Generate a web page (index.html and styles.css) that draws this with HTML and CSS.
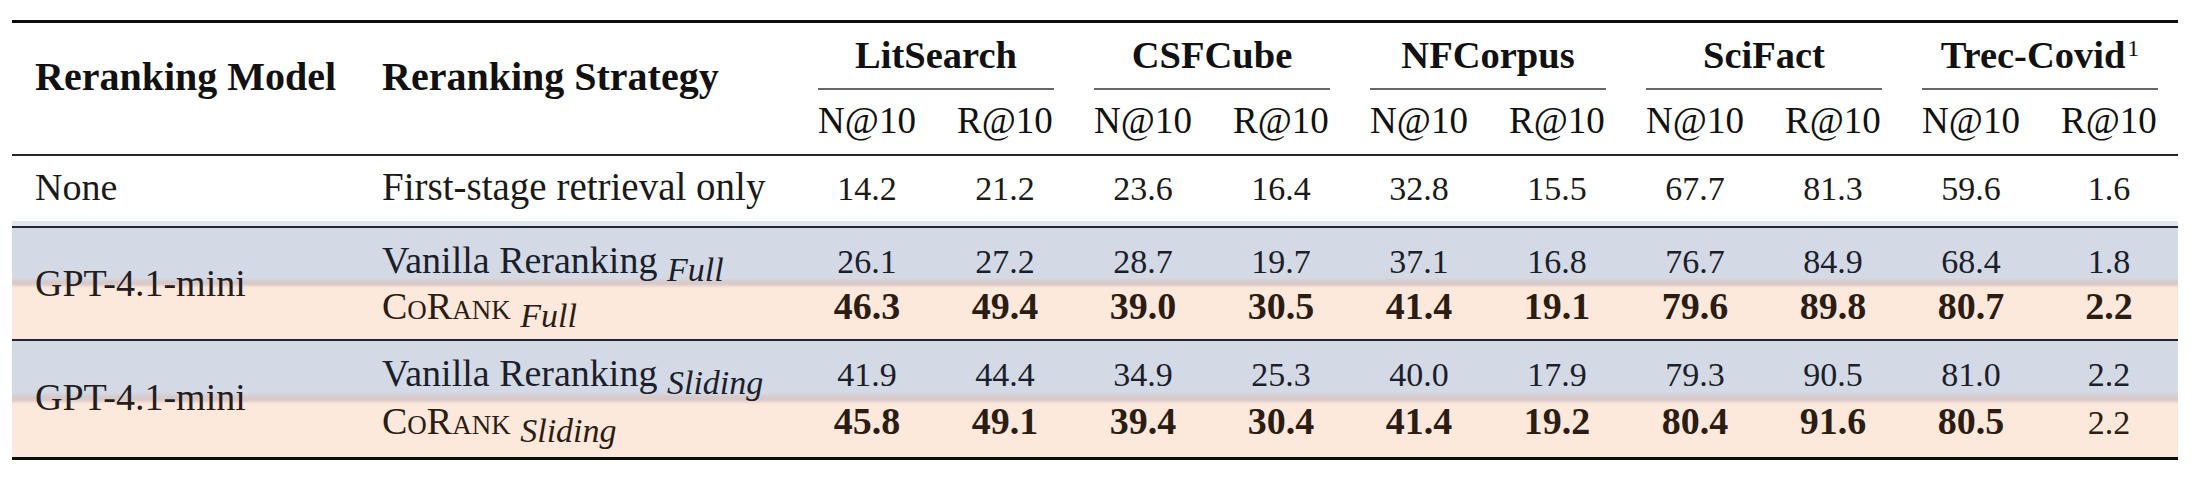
FILE: index.html
```html
<!DOCTYPE html>
<html lang="en">
<head>
<meta charset="utf-8">
<title>Reranking results</title>
<link rel="stylesheet" href="styles.css">
</head>
<body>
<div class="tbl">
  <div class="grid thead">
    <div class="hcol first">Reranking Model</div>
    <div class="hcol second">Reranking Strategy</div>
    <div class="grp g1">LitSearch</div>
    <div class="grp g2">CSFCube</div>
    <div class="grp g3">NFCorpus</div>
    <div class="grp g4">SciFact</div>
    <div class="grp g5">Trec-Covid<sup>1</sup></div>
    <div class="cmid g1"></div>
    <div class="cmid g2"></div>
    <div class="cmid g3"></div>
    <div class="cmid g4"></div>
    <div class="cmid g5"></div>
    <div class="met m1">N@10</div><div class="met m2">R@10</div>
    <div class="met m3">N@10</div><div class="met m4">R@10</div>
    <div class="met m5">N@10</div><div class="met m6">R@10</div>
    <div class="met m7">N@10</div><div class="met m8">R@10</div>
    <div class="met m9">N@10</div><div class="met m10">R@10</div>
  </div>

  <div class="grid plain">
    <div class="model-one">None</div>
    <div class="txt">First-stage retrieval only</div>
    <div class="num">14.2</div><div class="num">21.2</div>
    <div class="num">23.6</div><div class="num">16.4</div>
    <div class="num">32.8</div><div class="num">15.5</div>
    <div class="num">67.7</div><div class="num">81.3</div>
    <div class="num">59.6</div><div class="num">1.6</div>
  </div>

  <div class="grid sec s1">
    <div class="model">GPT-4.1-mini</div>
    <div class="line l1">
      <div class="txt">Vanilla Reranking <span class="sub">Full</span></div>
      <div class="num">26.1</div><div class="num">27.2</div>
      <div class="num">28.7</div><div class="num">19.7</div>
      <div class="num">37.1</div><div class="num">16.8</div>
      <div class="num">76.7</div><div class="num">84.9</div>
      <div class="num">68.4</div><div class="num">1.8</div>
    </div>
    <div class="line l2">
      <div class="txt"><span class="sc">CoRank</span> <span class="sub">Full</span></div>
      <div class="num b">46.3</div><div class="num b">49.4</div>
      <div class="num b">39.0</div><div class="num b">30.5</div>
      <div class="num b">41.4</div><div class="num b">19.1</div>
      <div class="num b">79.6</div><div class="num b">89.8</div>
      <div class="num b">80.7</div><div class="num b">2.2</div>
    </div>
  </div>

  <div class="grid sec s2">
    <div class="model">GPT-4.1-mini</div>
    <div class="line l1">
      <div class="txt">Vanilla Reranking <span class="sub">Sliding</span></div>
      <div class="num">41.9</div><div class="num">44.4</div>
      <div class="num">34.9</div><div class="num">25.3</div>
      <div class="num">40.0</div><div class="num">17.9</div>
      <div class="num">79.3</div><div class="num">90.5</div>
      <div class="num">81.0</div><div class="num">2.2</div>
    </div>
    <div class="line l2">
      <div class="txt"><span class="sc">CoRank</span> <span class="sub">Sliding</span></div>
      <div class="num b">45.8</div><div class="num b">49.1</div>
      <div class="num b">39.4</div><div class="num b">30.4</div>
      <div class="num b">41.4</div><div class="num b">19.2</div>
      <div class="num b">80.4</div><div class="num b">91.6</div>
      <div class="num b">80.5</div><div class="num">2.2</div>
    </div>
  </div>
</div>
</body>
</html>
```

FILE: styles.css
```css
html, body {
  margin: 0;
  padding: 0;
  background: #ffffff;
}

body {
  font-family: "Liberation Serif", Tinos, "DejaVu Serif", serif;
  color: #141414;
}

.tbl {
  margin: 20px 0 0 12px;
  width: 2166px;
  border-top: 3px solid #0c0c0c;
  border-bottom: 3px solid #0c0c0c;
}

.grid {
  display: grid;
  grid-template-columns: 350px 436px repeat(10, 138px);
}

/* ---------- header ---------- */
.thead {
  grid-template-rows: 65px 2px 64px;
  border-bottom: 2px solid #262626;
  color: #111111;
}

.hcol {
  grid-row: 1 / span 3;
  font-weight: 700;
  font-size: 40px;
  line-height: 46px;
  padding-top: 31.3px;
  white-space: nowrap;
}
.hcol.first { grid-column: 1; padding-left: 23px; }
.hcol.second { grid-column: 2; padding-left: 20px; }

.grp {
  grid-row: 1;
  font-weight: 700;
  font-size: 38.5px;
  line-height: 46px;
  padding-top: 9px;
  text-align: center;
  white-space: nowrap;
}
.grp sup {
  font-size: 24px;
  font-weight: 400;
  line-height: 0;
  vertical-align: 12px;
  margin-left: 2px;
}

.g1 { grid-column: 3 / span 2; }
.g2 { grid-column: 5 / span 2; }
.g3 { grid-column: 7 / span 2; }
.g4 { grid-column: 9 / span 2; }
.g5 { grid-column: 11 / span 2; }

.cmid {
  grid-row: 2;
  margin: 0 20px;
  height: 2px;
  background: #6a6a6a;
}

.met {
  grid-row: 3;
  font-size: 37px;
  line-height: 46px;
  padding-top: 7.5px;
  text-align: center;
}
.m1 { grid-column: 3; }  .m2 { grid-column: 4; }
.m3 { grid-column: 5; }  .m4 { grid-column: 6; }
.m5 { grid-column: 7; }  .m6 { grid-column: 8; }
.m7 { grid-column: 9; }  .m8 { grid-column: 10; }
.m9 { grid-column: 11; } .m10 { grid-column: 12; }

/* ---------- body rows ---------- */
.plain {
  grid-template-rows: 46px;
  align-items: baseline;
  padding: 8px 0 11px;
  border-bottom: 5px solid #e2e6ed;
  color: #1a1a1a;
}

.sec {
  grid-template-rows: 46px 46px;
  align-items: baseline;
  border-top: 2px solid #1f2734;
  padding: 8.5px 0 10.5px;
}

.s1 {
  background: linear-gradient(to bottom,
    #d3d9e5 0, #d3d9e5 50px,
    #d8cac8 54px, #d8cac8 56px,
    #fde8dc 60px, #fde8dc 100%);
}

.s2 {
  row-gap: 2px;
  padding-bottom: 13.5px;
  background: linear-gradient(to bottom,
    #d3d9e5 0, #d3d9e5 52px,
    #d8cac8 56px, #d8cac8 59px,
    #fde8dc 63px, #fde8dc 100%);
}

.line { display: contents; }
.l1 { color: #1b1e2b; }
.l2 { color: #2c1d13; }

.model,
.model-one {
  font-size: 38px;
  line-height: 46px;
  padding-left: 23px;
  white-space: nowrap;
}
.model {
  grid-column: 1;
  grid-row: 1 / span 2;
  align-self: center;
  color: #241d1d;
}

.txt {
  font-size: 38px;
  line-height: 46px;
  padding-left: 20px;
  white-space: nowrap;
}
.plain .txt {
  font-size: 39px;
}

.num {
  font-size: 34px;
  line-height: 46px;
  text-align: center;
}
.num.b {
  font-weight: 700;
  font-size: 38px;
}

.sub {
  font-style: italic;
  font-size: 34px;
  line-height: 0;
  vertical-align: -8px;
}

.sc {
  font-variant: small-caps;
}
```
